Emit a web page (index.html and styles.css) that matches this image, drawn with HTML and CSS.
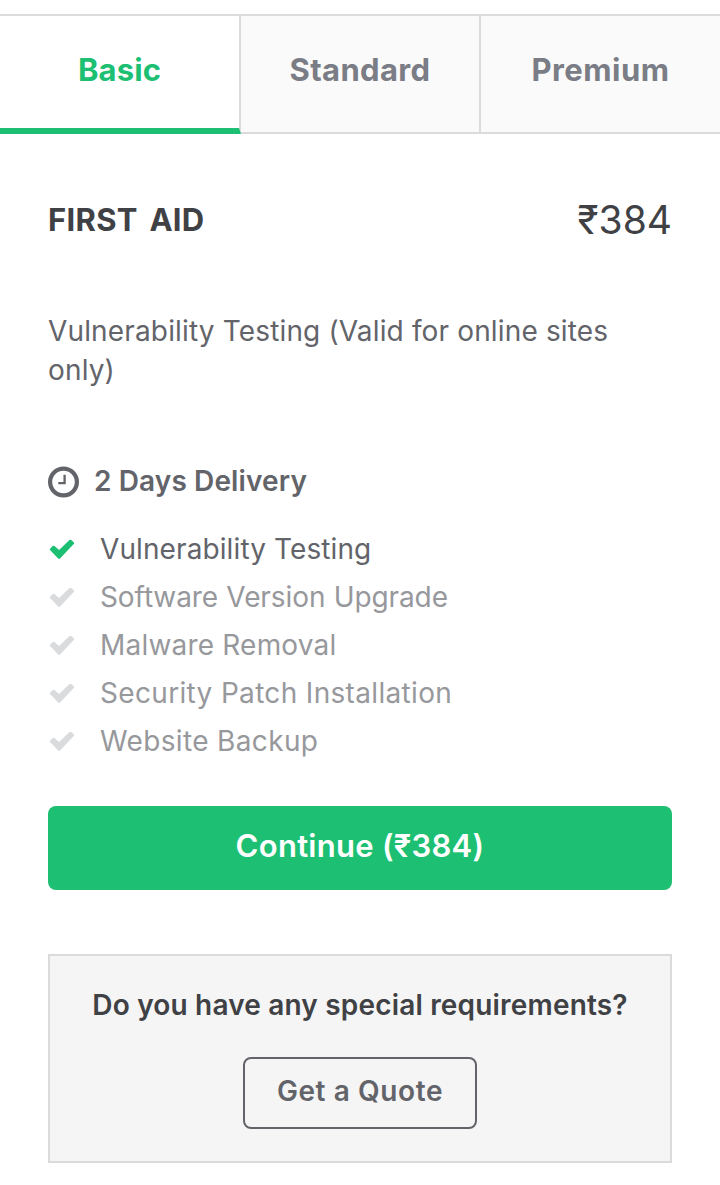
FILE: index.html
```html
<!DOCTYPE html>
<html lang="en">
<head>
<meta charset="utf-8">
<title>Packages</title>
<link rel="stylesheet" href="styles.css">
</head>
<body>
<svg class="defs" width="0" height="0" aria-hidden="true">
  <symbol id="check" viewBox="0 0 26 20">
    <path d="M3.2 10.4 L5.6 8 L11.2 12.8 L22.4 2 L24.8 4.2 L11.1 18.6 Z" fill="currentColor" stroke="currentColor" stroke-width="2.6" stroke-linejoin="round"/>
  </symbol>
</svg>
<nav class="tabs">
  <a class="tab tab-active"><span class="t-basic">Basic</span></a>
  <a class="tab"><span class="t-standard">Standard</span></a>
  <a class="tab"><span class="t-premium">Premium</span></a>
</nav>
<main class="package">
  <header class="package-header">
    <h1 class="title">FIRST AID</h1>
    <span class="price">₹384</span>
  </header>
  <p class="description">Vulnerability Testing (Valid for online sites only)</p>
  <div class="delivery">
    <svg class="clock" viewBox="0 0 32 32" fill="none" stroke="currentColor">
      <circle cx="15.5" cy="16" r="13.4" stroke-width="4.2"/>
      <path d="M16.6 8.7 V17.2 H10.3" stroke-width="2.3"/>
    </svg>
    <span class="delivery-text">2 Days Delivery</span>
  </div>
  <ul class="features">
    <li class="feature included"><svg class="check"><use href="#check"/></svg><span class="f1">Vulnerability Testing</span></li>
    <li class="feature"><svg class="check"><use href="#check"/></svg><span class="f2">Software Version Upgrade</span></li>
    <li class="feature"><svg class="check"><use href="#check"/></svg><span class="f3">Malware Removal</span></li>
    <li class="feature"><svg class="check"><use href="#check"/></svg><span class="f4">Security Patch Installation</span></li>
    <li class="feature"><svg class="check"><use href="#check"/></svg><span class="f5">Website Backup</span></li>
  </ul>
  <button class="continue">Continue (₹384)</button>
  <section class="quote">
    <h2 class="quote-title">Do you have any special requirements?</h2>
    <button class="quote-button">Get a Quote</button>
  </section>
</main>
</body>
</html>
```
FILE: styles.css
```css
* { box-sizing: border-box; }
body {
  margin: 0;
  padding-top: 14px;
  background: #fff;
  color: #62646a;
  font: 400 28px/40px Inter, "Liberation Sans", sans-serif;
}
.defs { display: block; }
.tabs { display: grid; grid-template-columns: 241px 240px 239px; height: 120px; }
.tab {
  padding-top: 34px;
  border-top: 2px solid #dadbdd;
  border-bottom: 2px solid #dadbdd;
  border-right: 2px solid #dadbdd;
  background: #fafafa;
  color: #7a7d85;
  font-size: 31px;
  font-weight: 700;
  text-align: center;
}
.tab:last-child { border-right: 0; }
.tab-active { background: #fff; color: #1dbf73; border-bottom: 6px solid #1dbf73; }
.t-basic { letter-spacing: 0.1px; }
.t-standard { letter-spacing: 0.35px; }
.t-premium { letter-spacing: 0.5px; }
.package { padding: 66px 48px 0; }
.package-header { display: flex; justify-content: space-between; height: 40px; color: #404145; }
.title { margin: 0; font-size: 31px; font-weight: 700; line-height: 40px; letter-spacing: 0.3px; word-spacing: 4px; }
.price { font-size: 39px; }
.description { margin: 72px 0 0; line-height: 39px; letter-spacing: 0.15px; }
.delivery { display: flex; align-items: center; gap: 14px; margin-top: 72px; height: 40px; font-weight: 600; }
.delivery-text { padding-bottom: 2px; letter-spacing: 0.12px; }
.clock { width: 32px; height: 32px; }
.features { list-style: none; margin: 23px 0 0; padding: 0; }
.feature { display: flex; align-items: center; gap: 26px; height: 48px; color: #97989c; }
.feature .check { color: #dadbdd; }
.included { color: #62646a; }
.included .check { color: #1dbf73; }
.f1 { letter-spacing: 0.1px; }
.f2 { letter-spacing: -0.09px; word-spacing: 0.5px; }
.f3 { letter-spacing: 0.2px; }
.f4 { letter-spacing: 0.33px; }
.f5 { letter-spacing: 0.35px; }
.check { width: 26px; height: 20px; }
.continue {
  display: block;
  width: 100%;
  height: 84px;
  margin-top: 41px;
  padding: 0 0 4px;
  border: 0;
  border-radius: 8px;
  background: #1dbf73;
  color: #fff;
  font: 600 31px/40px Inter, "Liberation Sans", sans-serif;
  letter-spacing: 0.28px;
}
.quote {
  display: flex;
  flex-direction: column;
  align-items: center;
  height: 209px;
  margin-top: 64px;
  padding-top: 29px;
  border: 2px solid #dadbdd;
  background: #f5f5f5;
}
.quote-title { margin: 0; color: #404145; font-size: 28px; font-weight: 600; line-height: 40px; letter-spacing: 0.18px; white-space: nowrap; }
.quote-button {
  width: 234px;
  height: 72px;
  margin-top: 32px;
  padding: 0 0 4px;
  border: 2px solid #62646a;
  border-radius: 8px;
  background: transparent;
  color: #62646a;
  font: 600 28px/40px Inter, "Liberation Sans", sans-serif;
  letter-spacing: 0.6px;
  white-space: nowrap;
}
```
